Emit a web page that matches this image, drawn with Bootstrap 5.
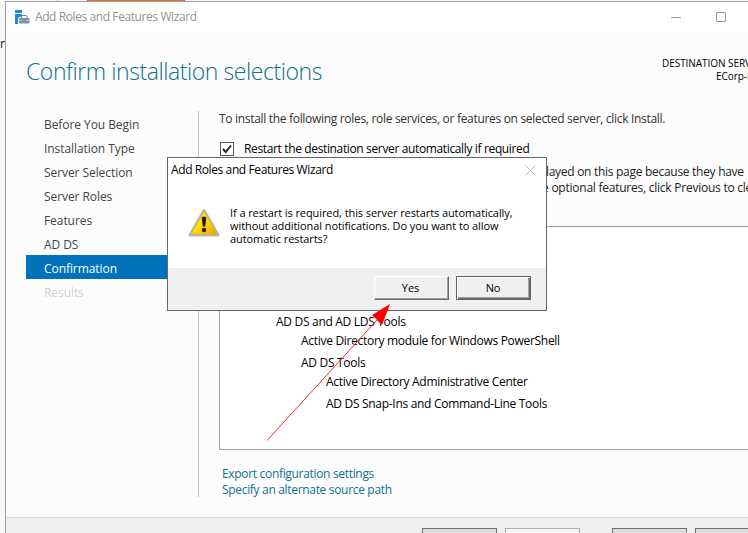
<!DOCTYPE html>
<html lang="en">
<head>
<meta charset="utf-8">
<title>Add Roles and Features Wizard</title>
<link rel="stylesheet" href="https://cdn.jsdelivr.net/npm/bootstrap@5.3.0/dist/css/bootstrap.min.css">
<style>
html,body{width:748px;height:533px;overflow:hidden}
body{background:#f8f8f8;font:12px/16px "Open Sans","Noto Sans",sans-serif;letter-spacing:-.3px;color:#000}
.backdrop-tab{left:87px;top:0;width:98px;height:1px;background:#f2641e}
.backdrop-line{left:57px;top:0;width:1px;height:1px;background:#c4c4c4}
.backdrop-text{left:0;top:36px;width:5px;color:#222}
.wizard{margin:1px 0 0 5px;width:743px;height:532px;border:1px solid #a0a0a0;border-width:1px 0 0 1px;background:#fcfcfc}
.titlebar{height:30px;background:#fff;color:#939393;padding:0 22px 1px 9px}
.titlebar .caption{margin-left:5px;letter-spacing:-.41px}
.wiz-head{height:79px;padding:22px 0 0 20px}
.wiz-head h1{font-size:23px;line-height:34px;font-weight:300;letter-spacing:-.43px;color:#0e6f90;width:636px}
.dest{font-size:10px;line-height:13px;padding-top:3px;letter-spacing:-.05px}
.dest div+div{padding-left:54px}
.steps{width:173px;height:386px;margin-left:20px;border-right:1px solid #c3c3c3}
.steps .nav-link{height:24px;line-height:28px;padding:0 0 0 18px;color:#444;letter-spacing:-.07px}
.steps .nav-link.active{background:#0072bc;color:#fff}
.steps .nav-link.disabled{color:#d2d2d2}
.pane{margin-left:20px;width:529px}
.intro{color:#333;letter-spacing:-.31px}
.restart{height:16px;margin-top:14px}
.restart-label{margin-left:10px;letter-spacing:-.36px}
.check{width:14px;height:14px;border:1px solid #555;background:#fff;margin-left:1px}
.note{color:#222;margin-top:7px;padding-left:323px;height:32px;letter-spacing:-.24px}
.note-first{padding-left:4px;letter-spacing:-.29px}
.tree{margin-top:30px;height:224px;border:1px solid #a0a0a0;border-right:0;background:#fff;padding:85px 0 0 56px}
.tree li{line-height:19px}
.tree .gap-row{margin-top:3px}
.tree ul{padding-left:25px}
.links{margin:16px 0 0 3px;color:#0e7290;letter-spacing:-.32px}
.foot{height:17px;background:#efefef;border-top:1px solid #dadada;padding:10px 0 0 416px;margin-top:19px}
.fbtn{width:75px;height:24px;border:1px solid #707070;background:#dddbdd}
.fbtn.off{border-color:#adb2b5;background:#f4f4f4}
.fbtn.apart{margin-left:32px}
.dlg{left:167px;top:157px;width:380px;height:154px;border:1px solid #666;background:#fff}
.dlg-title{height:25px;padding:0 10px 1px 3px;letter-spacing:-.4px}
.dlg-body{height:85px;padding:23px 0 0 20px}
.dlg-text{font-size:11px;line-height:13px;letter-spacing:-.08px;margin-left:10px}
.dlg-foot{background:#f0f0f0;height:42px;padding:8px 15px 0 0;gap:7px}
.dbtn{width:75px;height:24px;font-size:11px;line-height:22px;text-align:center;padding-right:2px;background:#f0f0f0;border:1px solid;border-color:#fff #696969 #696969 #fff;box-shadow:inset -1px -1px #a0a0a0,inset 1px 1px #f5f5f5;letter-spacing:-.1px}
.dbtn.main{padding-right:1px;border-color:#646464;box-shadow:inset 1px 1px #fff,inset -1px -1px #696969,inset -2px -2px #a0a0a0}
.arrow{left:260px;top:296px}
</style>
</head>
<body class="position-relative">
<div class="backdrop-line position-absolute"></div>
<div class="backdrop-tab position-absolute"></div>
<div class="backdrop-text position-absolute overflow-hidden">n</div>
<div class="d-flow-root overflow-hidden">
<main class="wizard d-flex flex-column overflow-hidden">
<header class="titlebar d-flex align-items-center flex-shrink-0">
<svg width="15" height="14" viewBox="0 0 15 14"><path d="M0 0h7v3H0zM0 4h7v1.500L4 8v6H0z" fill="#1c8ad6"/><path d="M3 7.500h12V14H3z" fill="#fff"/><path d="M4 8h10.500v5.500H4z" fill="#7893aa"/><path d="M6.500 8V6q0-.5.500-.5h4.500q.5 0 .5.500v2" fill="none" stroke="#6f8799"/><path d="M4 10.500h3m4 0h3.500" stroke="#c9d6df" stroke-width=".7"/></svg>
<span class="caption flex-grow-1">Add Roles and Features Wizard</span>
<svg width="56" height="12" viewBox="0 0 56 12" fill="none" stroke="#999"><path d="M1 6.500h10M46.500 1.500h9v9h-9z"/></svg>
</header>
<div class="wiz-head d-flex flex-shrink-0"><h1 class="m-0 flex-shrink-0">Confirm installation selections</h1><div class="dest text-nowrap"><div>DESTINATION SERV</div><div>ECorp-D</div></div></div>
<div class="d-flex">
<nav class="steps nav flex-column flex-nowrap flex-shrink-0">
<a class="nav-link">Before You Begin</a><a class="nav-link">Installation Type</a><a class="nav-link">Server Selection</a><a class="nav-link">Server Roles</a><a class="nav-link">Features</a><a class="nav-link">AD DS</a><a class="nav-link active">Confirmation</a><a class="nav-link disabled">Results</a>
</nav>
<section class="pane">
<p class="intro m-0">To install the following roles, role services, or features on selected server, click Install.</p>
<div class="restart d-flex align-items-center"><span class="check d-flex"><svg width="12" height="12" viewBox="0 0 12 12"><path d="M2 6l2.800 3L10 2.500" fill="none" stroke="#222" stroke-width="2"/></svg></span><span class="restart-label">Restart the destination server automatically if required</span></div>
<div class="note text-nowrap overflow-hidden"><div class="note-first">layed on this page because they have</div><div>e optional features, click Previous to cle</div></div>
<div class="tree"><ul class="list-unstyled m-0 p-0"><li>AD DS and AD LDS Tools
<ul class="list-unstyled"><li>Active Directory module for Windows PowerShell</li><li class="gap-row">AD DS Tools
<ul class="list-unstyled"><li>Active Directory Administrative Center</li><li class="gap-row">AD DS Snap-Ins and Command-Line Tools</li></ul></li></ul></li></ul></div>
<div class="links"><div>Export configuration settings</div><div>Specify an alternate source path</div></div>
</section>
</div>
<footer class="foot d-flex flex-shrink-0"><div class="fbtn flex-shrink-0"></div><div class="fbtn off flex-shrink-0 ms-2"></div><div class="fbtn apart flex-shrink-0"></div><div class="fbtn flex-shrink-0 ms-2"></div></footer>
</main>
</div>
<div class="dlg position-absolute">
<div class="dlg-title d-flex align-items-center justify-content-between"><span>Add Roles and Features Wizard</span><svg width="11" height="11" viewBox="0 0 11 11"><path d="M.5.5l10 10M10.500.5l-10 10" stroke="#bbb"/></svg></div>
<div class="dlg-body d-flex align-items-start">
<svg width="32" height="31" viewBox="0 0 32 31"><defs><linearGradient id="y" x2="1" y2="1"><stop stop-color="#fff04a"/><stop offset=".5" stop-color="#ffdd05"/><stop offset="1" stop-color="#f3a000"/></linearGradient></defs><path d="M16 4.500L30 29H2z" fill="#bbb" stroke="#b5b8bb" stroke-width="3" stroke-linejoin="round"/><path d="M16 5.500L29 28H3z" fill="url(#y)" stroke="#e5b400" stroke-width=".8" stroke-linejoin="round"/><path d="M13.700 11.500q2.300-2 4.600 0l-1 9h-2.600z" fill="#222"/><circle cx="16" cy="24" r="2.200" fill="#222"/></svg>
<div class="dlg-text">If a restart is required, this server restarts automatically,<br>without additional notifications. Do you want to allow<br>automatic restarts?</div></div>
<div class="dlg-foot d-flex justify-content-end"><div class="dbtn">Yes</div><div class="dbtn main">No</div></div>
</div>
<svg class="arrow position-absolute" width="140" height="150" viewBox="260 296 140 150"><path d="M267 440.500L378 319" stroke="#ff2a2a" stroke-width="1"/><path d="M390 304L372 315 382 325z" fill="#f00"/></svg>
<script src="https://cdn.jsdelivr.net/npm/bootstrap@5.3.0/dist/js/bootstrap.bundle.min.js"></script>
</body>
</html>
